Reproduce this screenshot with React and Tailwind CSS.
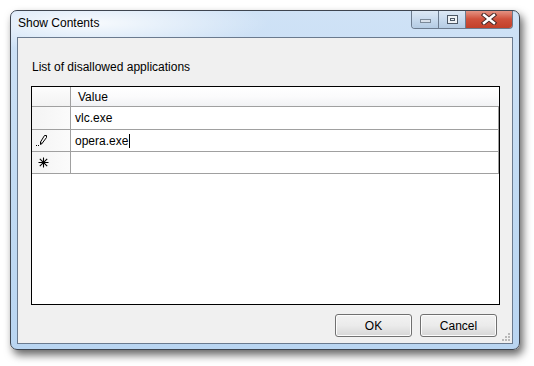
import React from "react";

function Pencil() {
  return (
    <svg width="14" height="14" viewBox="0 0 14 14">
      <path d="M9.5 1.5 L11.5 1.5 L11.5 3.5 L7 9.5 L5.5 10.5 L5.5 8 Z" fill="none" stroke="#000" strokeWidth="1" />
      <path d="M6 8.5 L7 9.5" stroke="#000" strokeWidth="1" />
      <rect x="1" y="11" width="1" height="1" fill="#000" />
      <rect x="3" y="11" width="1" height="1" fill="#000" />
    </svg>
  );
}

function Star() {
  return (
    <svg width="11" height="11" viewBox="0 0 11 11">
      <path d="M5.5 0.5 V10.5 M0.5 5.5 H10.5 M1.8 1.8 L9.2 9.2 M9.2 1.8 L1.8 9.2" stroke="#000" strokeWidth="1.1" />
    </svg>
  );
}

function CloseX() {
  return (
    <svg width="18" height="12" viewBox="0 0 18 12">
      <path d="M4 2 L14 10 M14 2 L4 10" stroke="#4a2a28" strokeWidth="4.5" strokeLinecap="square" />
      <path d="M4 2 L14 10 M14 2 L4 10" stroke="#ffffff" strokeWidth="2.4" strokeLinecap="square" />
    </svg>
  );
}

function Row({ head, pad, children }) {
  return (
    <div className="flex h-[22px] border-b border-[#a0a0a0]">
      <div className={"w-[39px] flex items-center border-r border-[#a0a0a0] bg-gradient-to-r from-[#f4f4f4] to-[#fbfbfb] " + pad}>
        {head}
      </div>
      <div className="flex-1 bg-white flex items-center pl-[4px] border-r border-[#a0a0a0]">{children}</div>
    </div>
  );
}

export default function App() {
  return (
    <div className="w-[534px] h-[366px] bg-white pl-[10px] pt-[10px]" style={{ fontFamily: '"Liberation Sans", Arial, sans-serif' }}>
      <div className="relative w-[510px] h-[340px] rounded-[7px] border border-[#3e4550] bg-gradient-to-b from-[#cfe2f6] via-[#c2dbf3] to-[#b9d5f1] shadow-[3px_5px_9px_rgba(0,0,0,0.6)] flex flex-col overflow-hidden">
        <div className="absolute left-0 top-0 w-[260px] h-[40px] bg-[radial-gradient(ellipse_at_30%_30%,rgba(255,255,255,0.85),rgba(255,255,255,0)_70%)]" />
        <div className="relative h-[26px] flex items-start">
          <div className="pl-[7px] pt-[5px] text-[12px] text-black leading-[15px]">Show Contents</div>
          <div className="ml-auto mr-[6px] -mt-[1px] flex h-[19px] rounded-b-[4px] border border-t-0 border-[#6c7b8e] overflow-hidden">
            <div className="w-[27px] flex items-center justify-center border-r border-[#6c7b8e] bg-gradient-to-b from-[#dfeaf6] via-[#c9dbee] to-[#b4cbe3]">
              <div className="w-[11px] h-[4px] mt-[4px] border border-[#7b8998] bg-[#d8e0ea]" />
            </div>
            <div className="w-[27px] flex items-center justify-center border-r border-[#6c7b8e] bg-gradient-to-b from-[#dfeaf6] via-[#c9dbee] to-[#b4cbe3]">
              <div className="w-[11px] h-[9px] border border-[#4c5866] bg-[#eef2f6] flex items-center justify-center">
                <div className="w-[5px] h-[3px] border border-[#4c5866]" />
              </div>
            </div>
            <div className="w-[46px] flex items-center justify-center bg-gradient-to-b from-[#e69a8b] via-[#d0513c] to-[#c24029]">
              <CloseX />
            </div>
          </div>
        </div>
        <div className="relative mx-[6px] mb-[5px] flex-1 border border-[#6a7a8e] bg-[#f0f0f0] flex flex-col">
          <div className="pl-[14px] pt-[22px] text-[12px] leading-[15px] text-black">List of disallowed applications</div>
          <div className="ml-[13px] mt-[11px] w-[469px] h-[219px] border border-black bg-white flex flex-col text-[12px] text-black">
            <div className="flex h-[20px] border-b border-[#a0a0a0]">
              <div className="w-[39px] border-r border-[#a0a0a0] bg-gradient-to-b from-[#fdfdfd] to-[#f2f2f2]" />
              <div className="flex-1 flex items-center pl-[7px] bg-gradient-to-b from-[#ffffff] via-[#fbfbfc] to-[#f1f2f4]">Value</div>
            </div>
            <div className="flex h-[23px] border-b border-[#a0a0a0]">
              <div className="w-[39px] border-r border-[#a0a0a0] bg-gradient-to-r from-[#f4f4f4] to-[#fbfbfb]" />
              <div className="flex-1 bg-white flex items-center pl-[4px] border-r border-[#a0a0a0]">vlc.exe</div>
            </div>
            <Row head={<Pencil />} pad="pl-[3px]">
              <span>opera.exe</span>
              <span className="inline-block w-[1px] h-[14px] bg-black ml-[1px]" />
            </Row>
            <Row head={<Star />} pad="pl-[6px]" />
          </div>
          <div className="mt-[9px] mr-[15px] flex justify-end gap-[8px]">
            <button className="w-[77px] h-[23px] rounded-[3px] border border-[#707070] bg-gradient-to-b from-[#f2f2f2] via-[#ebebeb] to-[#d6d6d6] text-[12px] text-black shadow-[inset_0_0_0_1px_#fcfcfc]">OK</button>
            <button className="w-[77px] h-[23px] rounded-[3px] border border-[#707070] bg-gradient-to-b from-[#f2f2f2] via-[#ebebeb] to-[#d6d6d6] text-[12px] text-black shadow-[inset_0_0_0_1px_#fcfcfc]">Cancel</button>
          </div>
          <svg className="absolute right-[1px] bottom-[1px]" width="10" height="10" viewBox="0 0 10 10">
            <g fill="#b8b8b8">
              <rect x="7" y="1" width="2" height="2" />
              <rect x="4" y="4" width="2" height="2" />
              <rect x="7" y="4" width="2" height="2" />
              <rect x="1" y="7" width="2" height="2" />
              <rect x="4" y="7" width="2" height="2" />
              <rect x="7" y="7" width="2" height="2" />
            </g>
          </svg>
        </div>
      </div>
    </div>
  );
}
